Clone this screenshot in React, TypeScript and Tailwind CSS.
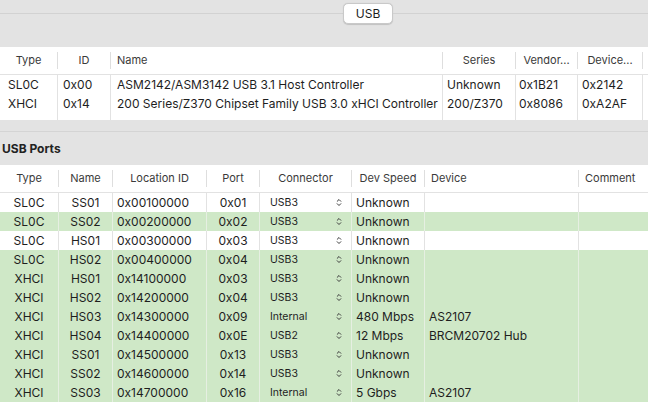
const font = { fontFamily: "Inter, 'Liberation Sans', sans-serif" };

type Col = { w: string; pad?: string };

const ctrlCols: Col[] = [
  { w: "w-[58px]", pad: "pl-[8px]" },
  { w: "w-[53px]", pad: "pl-[5px]" },
  { w: "w-[332px]", pad: "pl-[6px]" },
  { w: "w-[73px]", pad: "pl-[4px]" },
  { w: "w-[62px]", pad: "pl-[3px]" },
  { w: "w-[65px]", pad: "pl-[4px]" },
  { w: "w-[5px]" },
];

const ctrlHead = [
  { t: "Type", c: true },
  { t: "ID", c: true },
  { t: "Name", c: false },
  { t: "Series", c: true },
  { t: "Vendor...", c: true },
  { t: "Device...", c: true },
  { t: "", c: true },
];

const controllers = [
  ["SL0C", "0x00", "ASM2142/ASM3142 USB 3.1 Host Controller", "Unknown", "0x1B21", "0x2142", ""],
  ["XHCI", "0x14", "200 Series/Z370 Chipset Family USB 3.0 xHCI Controller", "200/Z370", "0x8086", "0xA2AF", ""],
];

const portCols = ["w-[59px]", "w-[54px]", "w-[94px]", "w-[53px]", "w-[92px]", "w-[73px]", "w-[154px]", "w-[69px]"];
const portHead = [
  { t: "Type", c: true },
  { t: "Name", c: true },
  { t: "Location ID", c: true },
  { t: "Port", c: true },
  { t: "Connector", c: true },
  { t: "Dev Speed", c: true },
  { t: "Device", c: false },
  { t: "Comment", c: false },
];

const ports = [
  { type: "SL0C", name: "SS01", loc: "0x00100000", port: "0x01", conn: "USB3", speed: "Unknown", dev: "", on: false },
  { type: "SL0C", name: "SS02", loc: "0x00200000", port: "0x02", conn: "USB3", speed: "Unknown", dev: "", on: true },
  { type: "SL0C", name: "HS01", loc: "0x00300000", port: "0x03", conn: "USB3", speed: "Unknown", dev: "", on: false },
  { type: "SL0C", name: "HS02", loc: "0x00400000", port: "0x04", conn: "USB3", speed: "Unknown", dev: "", on: true },
  { type: "XHCI", name: "HS01", loc: "0x14100000", port: "0x03", conn: "USB3", speed: "Unknown", dev: "", on: true },
  { type: "XHCI", name: "HS02", loc: "0x14200000", port: "0x04", conn: "USB3", speed: "Unknown", dev: "", on: true },
  { type: "XHCI", name: "HS03", loc: "0x14300000", port: "0x09", conn: "Internal", speed: "480 Mbps", dev: "AS2107", on: true },
  { type: "XHCI", name: "HS04", loc: "0x14400000", port: "0x0E", conn: "USB2", speed: "12 Mbps", dev: "BRCM20702 Hub", on: true },
  { type: "XHCI", name: "SS01", loc: "0x14500000", port: "0x13", conn: "USB3", speed: "Unknown", dev: "", on: true },
  { type: "XHCI", name: "SS02", loc: "0x14600000", port: "0x14", conn: "USB3", speed: "Unknown", dev: "", on: true },
  { type: "XHCI", name: "SS03", loc: "0x14700000", port: "0x16", conn: "Internal", speed: "5 Gbps", dev: "AS2107", on: true },
];

function HeadCell({ w, text, center, last }: { w: string; text: string; center: boolean; last?: boolean }) {
  return (
    <div className={`${w} shrink-0 flex items-center`}>
      <span className={`flex-1 truncate ${center ? "text-center" : "pl-[6px]"}`}>{text}</span>
      {!last && <span className="w-px h-[17px] bg-[#dedede]" />}
    </div>
  );
}

function UpDown() {
  return (
    <svg width="6" height="9" viewBox="0 0 6 9" className="shrink-0">
      <path d="M1.2 3.3 L3 1.5 L4.8 3.3 M1.2 5.7 L3 7.5 L4.8 5.7" fill="none" stroke="#3a3a3a" strokeWidth="1" strokeLinecap="round" strokeLinejoin="round" />
    </svg>
  );
}

export default function App() {
  return (
    <div className="w-[648px] h-[404px] overflow-hidden bg-[#e3e3e3] text-[12px] text-[#1e1e1e]" style={font}>
      {/* tab strip */}
      <div className="pt-[3px] h-[47px]">
        <div className="flex items-center h-[21px] w-full">
          <div className="w-[343px] h-px bg-[#d2d2d2]" />
          <div className="w-[50px] h-[21px] shrink-0 bg-white border border-[#c9c9c9] rounded-[5px] shadow-[0_0.5px_1px_rgba(0,0,0,0.15)] flex items-center justify-center text-[12px] text-[#1c1c1c]">
            USB
          </div>
          <div className="flex-1 h-px bg-[#d2d2d2]" />
        </div>
      </div>

      {/* controllers table */}
      <div className="bg-white h-[73px]">
        <div className="flex h-[28px] border-b border-[#e2e2e2] text-[#3a3a3a] text-[11px]">
          {ctrlCols.map((c, i) => (
            <HeadCell key={i} w={c.w} text={ctrlHead[i].t} center={ctrlHead[i].c} last={i === ctrlCols.length - 1} />
          ))}
        </div>
        {controllers.map((row, r) => (
          <div key={r} className="flex h-[19px] items-stretch">
            {row.map((v, i) => (
              <div key={i} className={`${ctrlCols[i].w} ${ctrlCols[i].pad ?? ""} shrink-0 flex items-center whitespace-nowrap overflow-hidden ${i < row.length - 1 ? "border-r border-[#e2e2e2]" : ""}`}>
                {v}
              </div>
            ))}
          </div>
        ))}
        <div className="flex h-[7px]">
          {ctrlCols.map((c, i) => (
            <div key={i} className={`${c.w} shrink-0 ${i < ctrlCols.length - 1 ? "border-r border-[#e2e2e2]" : ""}`} />
          ))}
        </div>
      </div>

      {/* section title */}
      <div className="h-[45px] pt-[11px]">
        <div className="h-px bg-[#d4d4d4]" />
        <div className="h-[33px] flex items-center pl-[2px] font-bold text-[12px] text-[#222]">USB Ports</div>
      </div>

      {/* ports table */}
      <div className="bg-white h-[239px]">
        <div className="flex h-[28px] border-b border-[#e2e2e2] text-[#3a3a3a] text-[11px]">
          {portCols.map((w, i) => (
            <HeadCell key={i} w={w} text={portHead[i].t} center={portHead[i].c} last={i === portCols.length - 1} />
          ))}
        </div>
        {ports.map((p, r) => {
          const line = p.on ? "border-r border-[#e6efe2]" : "border-r border-[#e2e2e2]";
          return (
            <div key={r} className={`flex h-[19px] ${p.on ? "bg-[#cfe8c7]" : "bg-white"}`}>
              <div className={`${portCols[0]} shrink-0 flex items-center justify-center ${line}`}>{p.type}</div>
              <div className={`${portCols[1]} shrink-0 flex items-center justify-center ${line}`}>{p.name}</div>
              <div className={`${portCols[2]} shrink-0 flex items-center pl-[4px] ${line}`}>{p.loc}</div>
              <div className={`${portCols[3]} shrink-0 flex items-center justify-center ${line}`}>{p.port}</div>
              <div className={`${portCols[4]} shrink-0 flex items-center pl-[10px] pr-[9px] text-[10.5px] ${line}`}>
                <span className="flex-1">{p.conn}</span>
                <UpDown />
              </div>
              <div className={`${portCols[5]} shrink-0 flex items-center pl-[4px] ${line}`}>{p.speed}</div>
              <div className={`${portCols[6]} shrink-0 flex items-center pl-[4px] ${line}`}>{p.dev}</div>
              <div className={`${portCols[7]} shrink-0`} />
            </div>
          );
        })}
      </div>
    </div>
  );
}
